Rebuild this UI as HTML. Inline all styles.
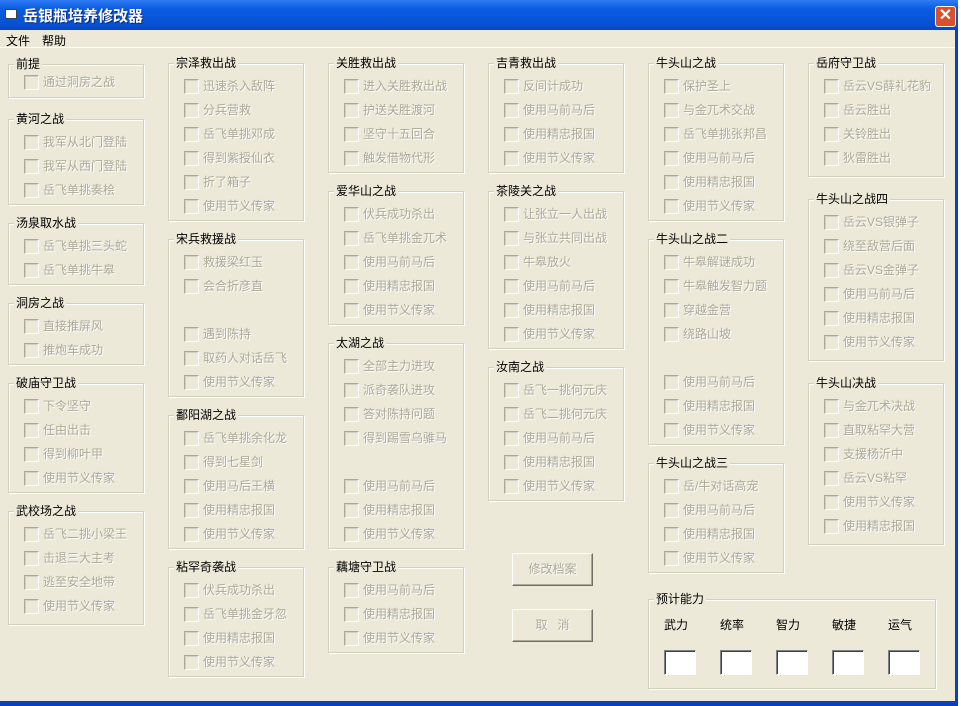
<!DOCTYPE html>
<html><head><meta charset="utf-8"><style>
*{margin:0;padding:0;box-sizing:border-box}
body{width:961px;height:706px;background:#fff;position:relative;overflow:hidden;font-family:"Liberation Sans","Noto Sans CJK SC","WenQuanYi Zen Hei",sans-serif;font-size:12px}
#win{position:absolute;left:0;top:0;width:958px;height:706px;background:#0a3fbf}
#tb{position:absolute;left:0;top:0;width:958px;height:30px;background:linear-gradient(#2f7bf5,#0a5ce0 30%,#0651d6 80%,#0a45c0);}
#tt{position:absolute;left:23px;top:5px;color:#fff;font-weight:bold;font-size:15px;text-shadow:1px 1px #0a2a80}
#ic{position:absolute;left:5px;top:9px;width:12px;height:10px;background:#fff;border:1px solid #345}
#cl{position:absolute;left:935px;top:6px;width:21px;height:21px;border:1px solid #fff;border-radius:3px;background:#d9502a;color:#fff;font-size:16px;font-weight:bold;text-align:center;line-height:18px}
#body{position:absolute;left:0;top:30px;width:955px;height:671px;background:#ece9d8}
#mb{position:absolute;left:0;top:0;width:955px;height:18px;border-bottom:1px solid #fff}
#mb span{position:absolute;top:2px}
.g{position:absolute;border:1px solid #d0d0bf;box-shadow:inset 1px 1px #fff,1px 1px #fff}
.g>b{position:absolute;left:5px;top:-9px;font-weight:normal;background:#ece9d8;padding:0 2px;color:#000;line-height:16px}
.i{position:absolute;left:15px;height:14px;white-space:nowrap;color:#aca899;text-shadow:1px 1px #fff;line-height:14px}
.i:before{content:"";position:absolute;left:0;top:0;width:13px;height:13px;border-top:1px solid #aca899;border-left:1px solid #aca899;border-right:1px solid #fff;border-bottom:1px solid #fff;box-shadow:inset 1px 1px #d4d0c4}
.i span{position:absolute;left:19px;top:0}
.btn{position:absolute;width:81px;height:33px;border:1px solid;border-color:#fff #716f64 #716f64 #fff;box-shadow:inset -1px -1px #aca899;color:#aca899;text-shadow:1px 1px #fff;text-align:center;line-height:31px}
.lab{position:absolute;top:586px;color:#000}
.inp{position:absolute;top:620px;width:32px;height:25px;background:#fff;border:1px solid;border-color:#808080 #fff #fff #808080;box-shadow:inset 1px 1px #404040}
</style></head><body>
<div id="win">
<div id="tb"><div id="ic"></div><div id="tt">岳银瓶培养修改器</div><div id="cl">✕</div></div>
<div id="body">
<div id="mb"><span style="left:6px">文件</span><span style="left:42px">帮助</span></div>

<div class="g" style="left:8px;top:34px;width:136px;height:34px"><b>前提</b><div class="i" style="top:10px"><span>通过洞房之战</span></div></div>
<div class="g" style="left:8px;top:89px;width:136px;height:86px"><b>黄河之战</b>
<div class="i" style="top:15px"><span>我军从北门登陆</span></div><div class="i" style="top:39px"><span>我军从西门登陆</span></div><div class="i" style="top:63px"><span>岳飞单挑奏桧</span></div></div>
<div class="g" style="left:8px;top:193px;width:136px;height:62px"><b>汤泉取水战</b>
<div class="i" style="top:15px"><span>岳飞单挑三头蛇</span></div><div class="i" style="top:39px"><span>岳飞单挑牛皋</span></div></div>
<div class="g" style="left:8px;top:273px;width:136px;height:62px"><b>洞房之战</b>
<div class="i" style="top:15px"><span>直接推屏风</span></div><div class="i" style="top:39px"><span>推炮车成功</span></div></div>
<div class="g" style="left:8px;top:353px;width:136px;height:110px"><b>破庙守卫战</b>
<div class="i" style="top:15px"><span>下令坚守</span></div><div class="i" style="top:39px"><span>任由出击</span></div><div class="i" style="top:63px"><span>得到柳叶甲</span></div><div class="i" style="top:87px"><span>使用节义传家</span></div></div>
<div class="g" style="left:8px;top:481px;width:136px;height:114px"><b>武校场之战</b>
<div class="i" style="top:15px"><span>岳飞二挑小梁王</span></div><div class="i" style="top:39px"><span>击退三大主考</span></div><div class="i" style="top:63px"><span>逃至安全地带</span></div><div class="i" style="top:87px"><span>使用节义传家</span></div></div>

<div class="g" style="left:168px;top:33px;width:136px;height:158px"><b>宗泽救出战</b>
<div class="i" style="top:15px"><span>迅速杀入敌阵</span></div><div class="i" style="top:39px"><span>分兵营救</span></div><div class="i" style="top:63px"><span>岳飞单挑邓成</span></div><div class="i" style="top:87px"><span>得到紫授仙衣</span></div><div class="i" style="top:111px"><span>折了箱子</span></div><div class="i" style="top:135px"><span>使用节义传家</span></div></div>
<div class="g" style="left:168px;top:209px;width:136px;height:158px"><b>宋兵救援战</b>
<div class="i" style="top:15px"><span>救援梁红玉</span></div><div class="i" style="top:39px"><span>会合折彦直</span></div><div class="i" style="top:87px"><span>遇到陈持</span></div><div class="i" style="top:111px"><span>取药人对话岳飞</span></div><div class="i" style="top:135px"><span>使用节义传家</span></div></div>
<div class="g" style="left:168px;top:385px;width:136px;height:134px"><b>鄱阳湖之战</b>
<div class="i" style="top:15px"><span>岳飞单挑余化龙</span></div><div class="i" style="top:39px"><span>得到七星剑</span></div><div class="i" style="top:63px"><span>使用马后王横</span></div><div class="i" style="top:87px"><span>使用精忠报国</span></div><div class="i" style="top:111px"><span>使用节义传家</span></div></div>
<div class="g" style="left:168px;top:537px;width:136px;height:110px"><b>粘罕奇袭战</b>
<div class="i" style="top:15px"><span>伏兵成功杀出</span></div><div class="i" style="top:39px"><span>岳飞单挑金牙忽</span></div><div class="i" style="top:63px"><span>使用精忠报国</span></div><div class="i" style="top:87px"><span>使用节义传家</span></div></div>

<div class="g" style="left:328px;top:33px;width:136px;height:110px"><b>关胜救出战</b>
<div class="i" style="top:15px"><span>进入关胜救出战</span></div><div class="i" style="top:39px"><span>护送关胜渡河</span></div><div class="i" style="top:63px"><span>坚守十五回合</span></div><div class="i" style="top:87px"><span>触发借物代形</span></div></div>
<div class="g" style="left:328px;top:161px;width:136px;height:134px"><b>爱华山之战</b>
<div class="i" style="top:15px"><span>伏兵成功杀出</span></div><div class="i" style="top:39px"><span>岳飞单挑金兀术</span></div><div class="i" style="top:63px"><span>使用马前马后</span></div><div class="i" style="top:87px"><span>使用精忠报国</span></div><div class="i" style="top:111px"><span>使用节义传家</span></div></div>
<div class="g" style="left:328px;top:313px;width:136px;height:206px"><b>太湖之战</b>
<div class="i" style="top:15px"><span>全部主力进攻</span></div><div class="i" style="top:39px"><span>派奇袭队进攻</span></div><div class="i" style="top:63px"><span>答对陈持问题</span></div><div class="i" style="top:87px"><span>得到踢雪乌骓马</span></div><div class="i" style="top:135px"><span>使用马前马后</span></div><div class="i" style="top:159px"><span>使用精忠报国</span></div><div class="i" style="top:183px"><span>使用节义传家</span></div></div>
<div class="g" style="left:328px;top:537px;width:136px;height:86px"><b>藕塘守卫战</b>
<div class="i" style="top:15px"><span>使用马前马后</span></div><div class="i" style="top:39px"><span>使用精忠报国</span></div><div class="i" style="top:63px"><span>使用节义传家</span></div></div>

<div class="g" style="left:488px;top:33px;width:136px;height:110px"><b>吉青救出战</b>
<div class="i" style="top:15px"><span>反间计成功</span></div><div class="i" style="top:39px"><span>使用马前马后</span></div><div class="i" style="top:63px"><span>使用精忠报国</span></div><div class="i" style="top:87px"><span>使用节义传家</span></div></div>
<div class="g" style="left:488px;top:161px;width:136px;height:158px"><b>茶陵关之战</b>
<div class="i" style="top:15px"><span>让张立一人出战</span></div><div class="i" style="top:39px"><span>与张立共同出战</span></div><div class="i" style="top:63px"><span>牛皋放火</span></div><div class="i" style="top:87px"><span>使用马前马后</span></div><div class="i" style="top:111px"><span>使用精忠报国</span></div><div class="i" style="top:135px"><span>使用节义传家</span></div></div>
<div class="g" style="left:488px;top:337px;width:136px;height:134px"><b>汝南之战</b>
<div class="i" style="top:15px"><span>岳飞一挑何元庆</span></div><div class="i" style="top:39px"><span>岳飞二挑何元庆</span></div><div class="i" style="top:63px"><span>使用马前马后</span></div><div class="i" style="top:87px"><span>使用精忠报国</span></div><div class="i" style="top:111px"><span>使用节义传家</span></div></div>
<div class="btn" style="left:512px;top:523px">修改档案</div>
<div class="btn" style="left:512px;top:579px">取&nbsp;&nbsp;&nbsp;消</div>

<div class="g" style="left:648px;top:33px;width:136px;height:158px"><b>牛头山之战</b>
<div class="i" style="top:15px"><span>保护圣上</span></div><div class="i" style="top:39px"><span>与金兀术交战</span></div><div class="i" style="top:63px"><span>岳飞单挑张邦昌</span></div><div class="i" style="top:87px"><span>使用马前马后</span></div><div class="i" style="top:111px"><span>使用精忠报国</span></div><div class="i" style="top:135px"><span>使用节义传家</span></div></div>
<div class="g" style="left:648px;top:209px;width:136px;height:206px"><b>牛头山之战二</b>
<div class="i" style="top:15px"><span>牛皋解谜成功</span></div><div class="i" style="top:39px"><span>牛皋触发智力题</span></div><div class="i" style="top:63px"><span>穿越金营</span></div><div class="i" style="top:87px"><span>绕路山坡</span></div><div class="i" style="top:135px"><span>使用马前马后</span></div><div class="i" style="top:159px"><span>使用精忠报国</span></div><div class="i" style="top:183px"><span>使用节义传家</span></div></div>
<div class="g" style="left:648px;top:433px;width:136px;height:110px"><b>牛头山之战三</b>
<div class="i" style="top:15px"><span>岳/牛对话高宠</span></div><div class="i" style="top:39px"><span>使用马前马后</span></div><div class="i" style="top:63px"><span>使用精忠报国</span></div><div class="i" style="top:87px"><span>使用节义传家</span></div></div>
<div class="g" style="left:648px;top:569px;width:288px;height:90px"><b>预计能力</b></div>
<div class="lab" style="left:664px">武力</div><div class="lab" style="left:720px">统率</div><div class="lab" style="left:776px">智力</div><div class="lab" style="left:832px">敏捷</div><div class="lab" style="left:888px">运气</div>
<div class="inp" style="left:664px"></div><div class="inp" style="left:720px"></div><div class="inp" style="left:776px"></div><div class="inp" style="left:832px"></div><div class="inp" style="left:888px"></div>

<div class="g" style="left:808px;top:33px;width:136px;height:114px"><b>岳府守卫战</b>
<div class="i" style="top:15px"><span>岳云VS薛礼花豹</span></div><div class="i" style="top:39px"><span>岳云胜出</span></div><div class="i" style="top:63px"><span>关铃胜出</span></div><div class="i" style="top:87px"><span>狄雷胜出</span></div></div>
<div class="g" style="left:808px;top:169px;width:136px;height:162px"><b>牛头山之战四</b>
<div class="i" style="top:15px"><span>岳云VS银弹子</span></div><div class="i" style="top:39px"><span>绕至敌营后面</span></div><div class="i" style="top:63px"><span>岳云VS金弹子</span></div><div class="i" style="top:87px"><span>使用马前马后</span></div><div class="i" style="top:111px"><span>使用精忠报国</span></div><div class="i" style="top:135px"><span>使用节义传家</span></div></div>
<div class="g" style="left:808px;top:353px;width:136px;height:162px"><b>牛头山决战</b>
<div class="i" style="top:15px"><span>与金兀术决战</span></div><div class="i" style="top:39px"><span>直取粘罕大营</span></div><div class="i" style="top:63px"><span>支援杨沂中</span></div><div class="i" style="top:87px"><span>岳云VS粘罕</span></div><div class="i" style="top:111px"><span>使用节义传家</span></div><div class="i" style="top:135px"><span>使用精忠报国</span></div></div>
</div>
</div>
</body></html>
